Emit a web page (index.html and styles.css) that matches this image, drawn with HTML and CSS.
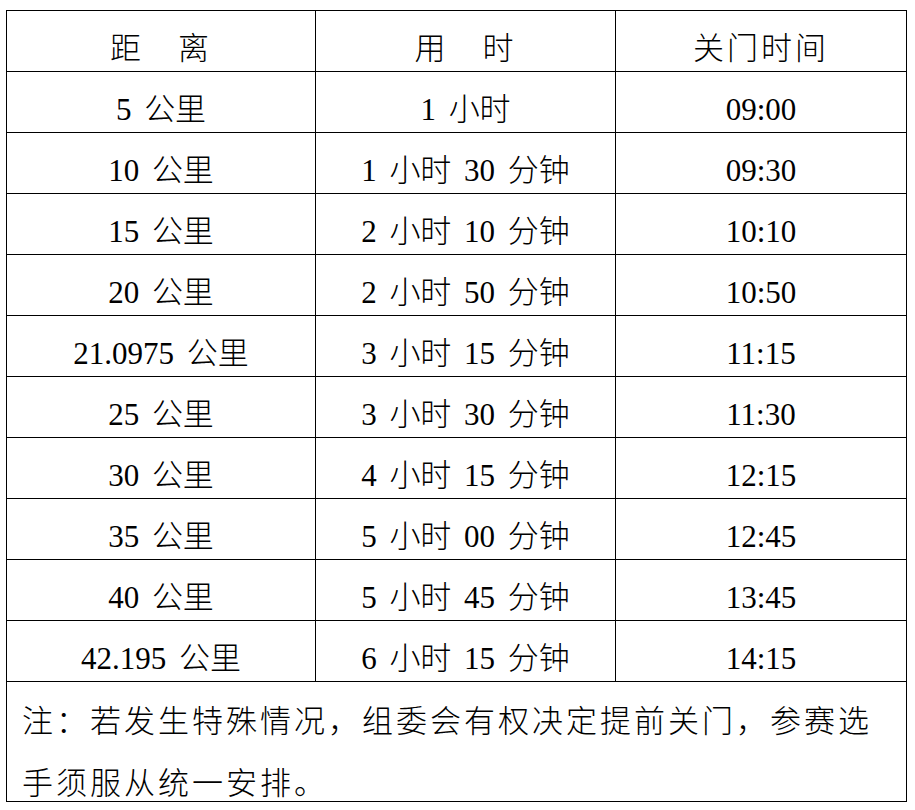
FILE: index.html
```html
<!DOCTYPE html>
<html lang="zh-CN">
<head>
<meta charset="utf-8">
<title>关门时间</title>
<link rel="stylesheet" href="styles.css">
</head>
<body>
<div class="sheet">
  <div class="cell head">距　离</div>
  <div class="cell head">用　时</div>
  <div class="cell head">关门时间</div>

  <div class="cell">5 公里</div>
  <div class="cell">1 小时</div>
  <div class="cell">09:00</div>

  <div class="cell">10 公里</div>
  <div class="cell">1 小时 30 分钟</div>
  <div class="cell">09:30</div>

  <div class="cell">15 公里</div>
  <div class="cell">2 小时 10 分钟</div>
  <div class="cell">10:10</div>

  <div class="cell">20 公里</div>
  <div class="cell">2 小时 50 分钟</div>
  <div class="cell">10:50</div>

  <div class="cell">21.0975 公里</div>
  <div class="cell">3 小时 15 分钟</div>
  <div class="cell">11:15</div>

  <div class="cell">25 公里</div>
  <div class="cell">3 小时 30 分钟</div>
  <div class="cell">11:30</div>

  <div class="cell">30 公里</div>
  <div class="cell">4 小时 15 分钟</div>
  <div class="cell">12:15</div>

  <div class="cell">35 公里</div>
  <div class="cell">5 小时 00 分钟</div>
  <div class="cell">12:45</div>

  <div class="cell">40 公里</div>
  <div class="cell">5 小时 45 分钟</div>
  <div class="cell">13:45</div>

  <div class="cell">42.195 公里</div>
  <div class="cell">6 小时 15 分钟</div>
  <div class="cell">14:15</div>

  <div class="cell note">注：若发生特殊情况，组委会有权决定提前关门，参赛选手须服从统一安排。</div>
</div>
</body>
</html>
```

FILE: styles.css
```css
html, body {
  margin: 0;
  padding: 0;
  background: #fff;
}

body {
  font-family: "Liberation Serif", "Noto Sans CJK SC", serif;
  font-size: 31px;
  font-weight: 300;
  color: #000;
}

.sheet {
  display: grid;
  grid-template-columns: 309px 300px 291px;
  width: max-content;
  margin: 10px 0 0 6px;
  border-left: 1px solid #000;
  border-top: 1px solid #000;
}

.cell {
  box-sizing: border-box;
  height: 61px;
  padding-top: 21px;
  line-height: 34px;
  text-align: center;
  white-space: nowrap;
  word-spacing: 5px;
  border-right: 1px solid #000;
  border-bottom: 1px solid #000;
}

.head {
  letter-spacing: 3px;
  word-spacing: 0;
}

.note {
  grid-column: 1 / -1;
  height: 120px;
  padding: 9px 15px 0 15px;
  line-height: 62px;
  text-align: left;
  white-space: normal;
  word-spacing: 0;
  letter-spacing: 3px;
}
```
